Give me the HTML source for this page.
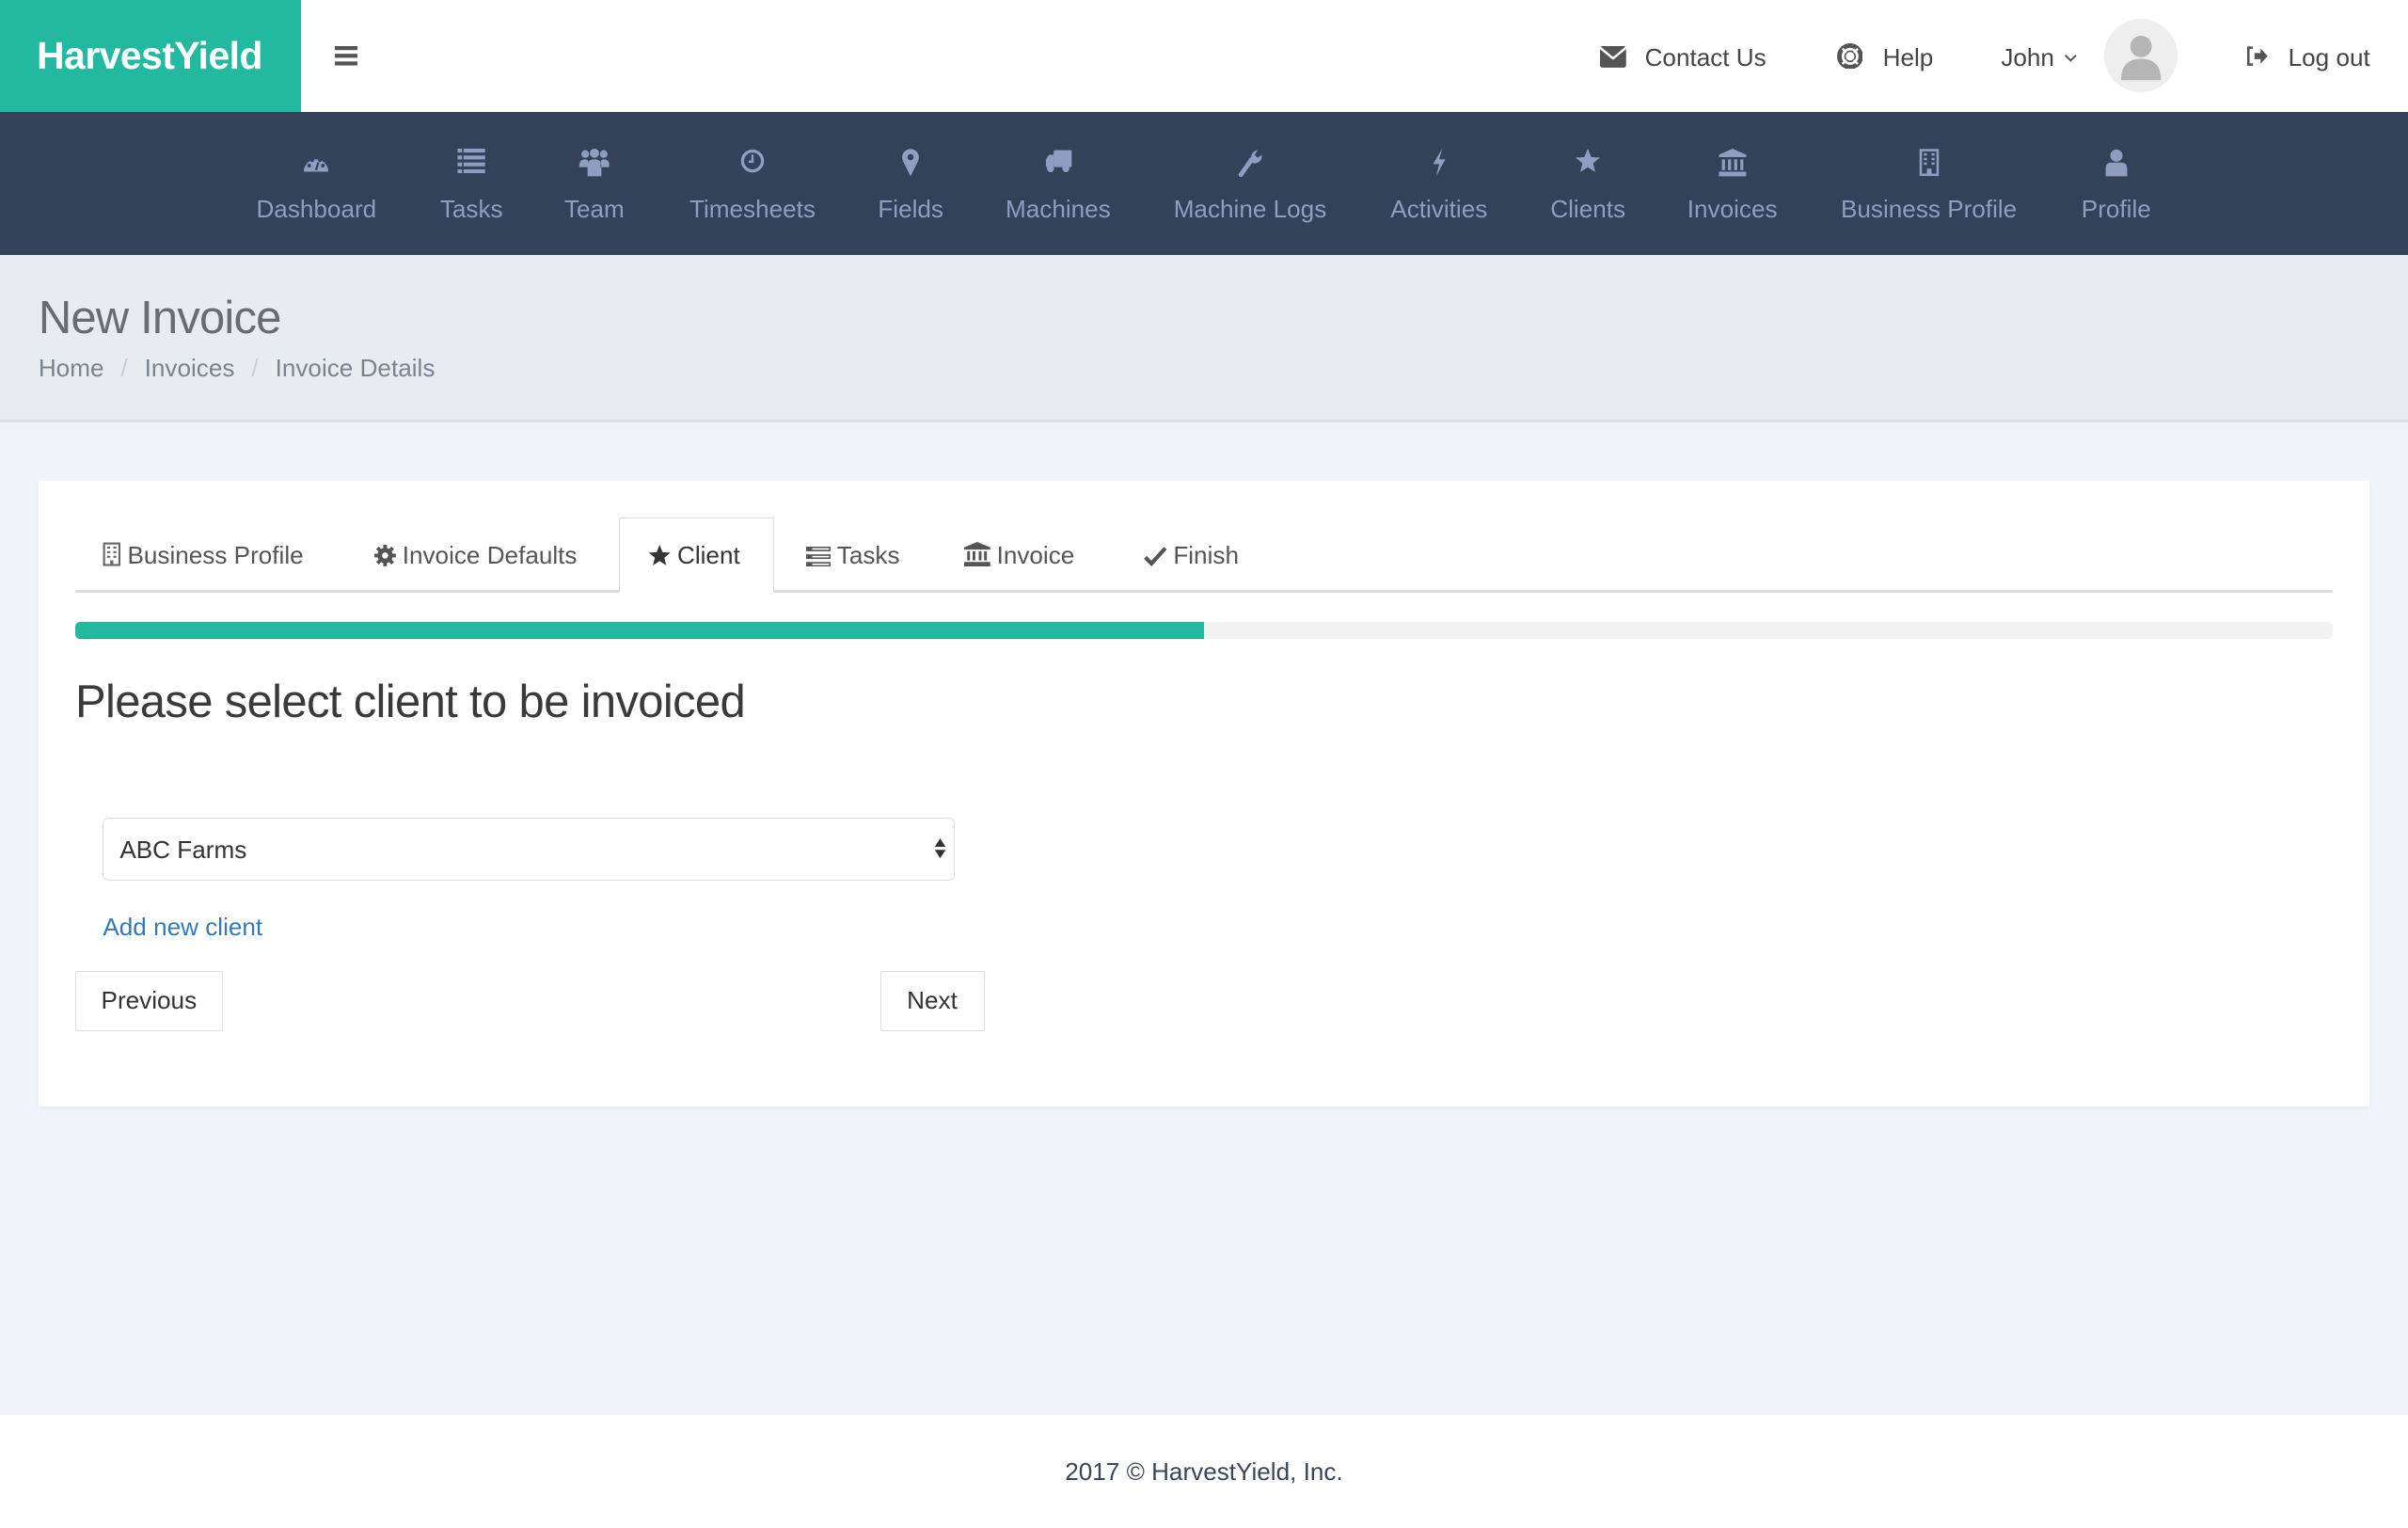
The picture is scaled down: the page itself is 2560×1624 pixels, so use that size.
<!DOCTYPE html>
<html><head><meta charset="utf-8">
<style>
*{box-sizing:border-box;margin:0;padding:0}
html,body{width:2560px;height:1624px;overflow:hidden;background:#f0f3f8}
#w{zoom:1.63265;width:1568px;height:995px;position:relative;font-family:"Liberation Sans",sans-serif;font-size:16px;color:#333}
.abs{position:absolute}
#top{left:0;top:0;width:1568px;height:73px;background:#fff}
#logo{left:0;top:0;width:196px;height:73px;background:#22b9a0;color:#fff;font-weight:bold;font-size:25px;line-height:73px;padding-left:24px;letter-spacing:-0.3px}
.tl{color:#444;font-size:16px;top:28px;white-space:nowrap}
#nav{left:0;top:73px;width:1568px;height:93px;background:#344259}
.ni{position:absolute;top:0;height:93px;text-align:center;color:#8d9ec0;font-size:16px;transform:translateX(-50%);white-space:nowrap}
.ni svg{position:absolute;left:50%;top:24px;transform:translateX(-50%)}
.ni span{position:absolute;top:54px;left:50%;transform:translateX(-50%)}
#ph{left:0;top:166px;width:1568px;height:109px;background:#e8ebf0;border-bottom:2px solid #dde1e7}
#card{left:25px;top:313px;width:1518px;height:407px;background:#fff;box-shadow:0 1px 2px rgba(0,0,0,.04)}
.tab{position:absolute;top:352px;font-size:16px;color:#555;white-space:nowrap}
.tab svg{vertical-align:-2px;margin-right:4px}
.btn{position:absolute;top:632px;height:39px;border:1px solid #ddd;background:#fff;line-height:37px;text-align:center;font-size:16px;color:#333}
#foot{left:0;top:921px;width:1568px;height:74px;background:#fff;text-align:center;line-height:74px;color:#3a4556;font-size:16px}
</style></head><body><div id="w">
<div id="top" class="abs"></div>
<div id="logo" class="abs">HarvestYield</div>
<svg class="abs" style="left:218px;top:30px" width="15" height="13"><rect y="0" width="15" height="2.6" fill="#555"/><rect y="5" width="15" height="2.6" fill="#555"/><rect y="10" width="15" height="2.6" fill="#555"/></svg>
<svg class="abs" style="left:1042px;top:30px" width="17" height="14"><rect x="0" y="0" width="17" height="14" rx="1.5" fill="#555"/><path d="M0 1 L8.5 8 L17 1" stroke="#fff" stroke-width="1.5" fill="none"/></svg>
<div class="abs tl" style="left:1071px">Contact Us</div>
<svg class="abs" style="left:1196px;top:28px" width="17" height="17"><circle cx="8.5" cy="8.5" r="7" stroke="#555" stroke-width="3" fill="none"/><circle cx="8.5" cy="8.5" r="3.3" fill="#fff" stroke="#555" stroke-width="1"/><path d="M3.5 3.5l2.5 2.5M13.5 3.5l-2.5 2.5M3.5 13.5l2.5-2.5M13.5 13.5l-2.5-2.5" stroke="#fff" stroke-width="1.5"/></svg>
<div class="abs tl" style="left:1226px">Help</div>
<div class="abs tl" style="left:1303px">John</div>
<svg class="abs" style="left:1344px;top:35px" width="9" height="6"><path d="M1 1l3.5 3.5L8 1" stroke="#555" stroke-width="1.2" fill="none"/></svg>
<div class="abs" style="left:1370px;top:12px;width:48px;height:48px;border-radius:50%;background:#eee;overflow:hidden"><svg width="48" height="48"><circle cx="24" cy="18" r="7" fill="#b5b5b5"/><path d="M11 40 Q11 26 24 26 Q37 26 37 40 Z" fill="#b5b5b5"/></svg></div>
<svg class="abs" style="left:1462px;top:30px" width="15" height="13"><path d="M5 1H2v11h3" stroke="#555" stroke-width="1.6" fill="none"/><path d="M6 4.5h4V1.5l4.5 5-4.5 5V8.5H6z" fill="#555"/></svg>
<div class="abs tl" style="left:1490px">Log out</div>

<div id="nav" class="abs">
<div class="ni" style="left:206px"><svg width="18" height="16" viewBox="0 0 18 16"><path d="M1 15 A8 8 0 0 1 17 15 Z" fill="#8d9ec0"/><circle cx="4.5" cy="11" r="1.2" fill="#344259"/><circle cx="6.5" cy="7.5" r="1.2" fill="#344259"/><circle cx="11.5" cy="7.5" r="1.2" fill="#344259"/><circle cx="13.5" cy="11" r="1.2" fill="#344259"/><path d="M9 14l1.5-5" stroke="#344259" stroke-width="1.4"/></svg><span>Dashboard</span></div>
<div class="ni" style="left:307px"><svg width="18" height="16"><g fill="#8d9ec0"><rect x="0" y="0" width="3" height="2.5"/><rect x="4" y="0" width="14" height="2.5"/><rect x="0" y="4.5" width="3" height="2.5"/><rect x="4" y="4.5" width="14" height="2.5"/><rect x="0" y="9" width="3" height="2.5"/><rect x="4" y="9" width="14" height="2.5"/><rect x="0" y="13.5" width="3" height="2.5"/><rect x="4" y="13.5" width="14" height="2.5"/></g></svg><span>Tasks</span></div>
<div class="ni" style="left:387px"><svg width="20" height="18"><g fill="#8d9ec0"><circle cx="4" cy="3.5" r="2.5"/><circle cx="16" cy="3.5" r="2.5"/><circle cx="10" cy="3" r="3"/><path d="M0 12 Q0 7 4 7 Q6 7 6 9 V12Z M20 12 Q20 7 16 7 Q14 7 14 9 V12Z M5.5 18 V11 Q5.5 7 10 7 Q14.5 7 14.5 11 V18Z"/></g></svg><span>Team</span></div>
<div class="ni" style="left:490px"><svg width="16" height="16"><circle cx="8" cy="8" r="6.5" stroke="#8d9ec0" stroke-width="2" fill="none"/><path d="M8 4v4.5h-2.5" stroke="#8d9ec0" stroke-width="1.5" fill="none"/></svg><span>Timesheets</span></div>
<div class="ni" style="left:593px"><svg width="12" height="18"><path d="M6 18 L1 8 A5.5 5.5 0 1 1 11 8 Z" fill="#8d9ec0"/><circle cx="6" cy="5.5" r="2" fill="#344259"/></svg><span>Fields</span></div>
<div class="ni" style="left:689px"><svg width="18" height="16"><g fill="#8d9ec0"><rect x="6" y="1" width="12" height="11" rx="1"/><path d="M1 7 L3 4 H6 V12 H1Z"/><circle cx="4" cy="13" r="2.3"/><circle cx="14" cy="13" r="2.3"/></g></svg><span>Machines</span></div>
<div class="ni" style="left:814px"><svg width="16" height="18"><path d="M2 17 L9 7" stroke="#8d9ec0" stroke-width="3" stroke-linecap="round"/><path d="M9 7 A4.5 4.5 0 0 1 13 1 L11 4 L13 6 L15.5 4 A4.5 4.5 0 0 1 9 9Z" fill="#8d9ec0"/></svg><span>Machine Logs</span></div>
<div class="ni" style="left:937px"><svg width="12" height="18"><path d="M8 0 L2 10 H6 L4 18 L10 7 H6 Z" fill="#8d9ec0"/></svg><span>Activities</span></div>
<div class="ni" style="left:1034px"><svg width="17" height="16"><path d="M8.5 0l2.2 5.4 5.8.4-4.5 3.7 1.4 5.7-4.9-3.1-4.9 3.1 1.4-5.7L.5 5.8l5.8-.4z" fill="#8d9ec0"/></svg><span>Clients</span></div>
<div class="ni" style="left:1128px"><svg width="18" height="18"><g fill="#8d9ec0"><path d="M9 0 L18 4 V5.5 H0 V4Z"/><rect x="2" y="7" width="2" height="7"/><rect x="6" y="7" width="2" height="7"/><rect x="10" y="7" width="2" height="7"/><rect x="14" y="7" width="2" height="7"/><rect x="0" y="15" width="18" height="3"/></g></svg><span>Invoices</span></div>
<div class="ni" style="left:1256px"><svg width="13" height="18"><rect x="1" y="1" width="11" height="16" fill="none" stroke="#8d9ec0" stroke-width="1.6"/><g fill="#8d9ec0"><rect x="3" y="3" width="2" height="1.5"/><rect x="8" y="3" width="2" height="1.5"/><rect x="3" y="6" width="2" height="1.5"/><rect x="8" y="6" width="2" height="1.5"/><rect x="3" y="9" width="2" height="1.5"/><rect x="8" y="9" width="2" height="1.5"/><rect x="5" y="13" width="3" height="4"/></g></svg><span>Business Profile</span></div>
<div class="ni" style="left:1378px"><svg width="14" height="18"><g fill="#8d9ec0"><circle cx="7" cy="4.5" r="4"/><path d="M0 18 V13 Q0 9 4 9 H10 Q14 9 14 13 V18Z"/></g></svg><span>Profile</span></div>
</div>

<div id="ph" class="abs"></div>
<div class="abs" style="left:25px;top:190px;font-size:30px;color:#6a6d70;letter-spacing:-0.5px">New Invoice</div>
<div class="abs" style="left:25px;top:230px;font-size:16px;color:#7a8390;white-space:nowrap">Home<span style="color:#ccc;padding:0 11px">/</span>Invoices<span style="color:#ccc;padding:0 11px">/</span>Invoice Details</div>

<div id="card" class="abs"></div>
<div class="abs" style="left:49px;top:384px;width:1470px;height:2px;background:#ddd"></div>
<div class="abs" style="left:403px;top:337px;width:101px;height:49px;background:#fff;border:1px solid #ddd;border-bottom:none"></div>
<div class="tab" style="left:67px"><svg width="12" height="16"><rect x="1" y="1" width="10" height="14" fill="none" stroke="#666" stroke-width="1.3"/><g fill="#666"><rect x="3" y="3" width="2" height="1.3"/><rect x="7" y="3" width="2" height="1.3"/><rect x="3" y="6" width="2" height="1.3"/><rect x="7" y="6" width="2" height="1.3"/><rect x="3" y="9" width="2" height="1.3"/><rect x="7" y="9" width="2" height="1.3"/><rect x="5" y="12" width="2" height="3"/></g></svg>Business Profile</div>
<div class="tab" style="left:244px"><svg width="14" height="14" viewBox="0 0 14 14"><circle cx="7" cy="7" r="5" fill="#555"/><g stroke="#555" stroke-width="2.4"><path d="M7 0v14M0 7h14M2 2l10 10M12 2L2 12"/></g><circle cx="7" cy="7" r="2" fill="#fff"/></svg>Invoice Defaults</div>
<div class="tab" style="left:422px;color:#333"><svg width="15" height="14"><path d="M7.5 0l1.9 4.8 5.1.3-3.9 3.3 1.2 5-4.3-2.8-4.3 2.8 1.2-5L.5 5.1l5.1-.3z" fill="#333"/></svg>Client</div>
<div class="tab" style="left:525px"><svg width="16" height="13"><g fill="#555"><rect x="0" y="0" width="16" height="3"/><rect x="0" y="5" width="16" height="3"/><rect x="0" y="10" width="16" height="3"/></g><g fill="#fff"><rect x="4" y="1" width="11" height="1"/><rect x="4" y="6" width="11" height="1"/><rect x="4" y="11" width="11" height="1"/></g></svg>Tasks</div>
<div class="tab" style="left:628px"><svg width="17" height="16"><g fill="#555"><path d="M8.5 0 L17 3.5 V5 H0 V3.5Z"/><rect x="2" y="6" width="1.8" height="6"/><rect x="5.5" y="6" width="1.8" height="6"/><rect x="9.5" y="6" width="1.8" height="6"/><rect x="13" y="6" width="1.8" height="6"/><rect x="0" y="13" width="17" height="3"/></g></svg>Invoice</div>
<div class="tab" style="left:745px"><svg width="15" height="13"><path d="M1 7l4 4 9-10" stroke="#555" stroke-width="2.6" fill="none"/></svg>Finish</div>

<div class="abs" style="left:49px;top:405px;width:1470px;height:11px;background:#f2f2f2;border-radius:3px;overflow:hidden"><div style="width:735px;height:11px;background:#22b9a0;border-bottom:1px solid #1a9e87"></div></div>
<div class="abs" style="left:49px;top:440px;font-size:30px;color:#3a3a3a;white-space:nowrap;letter-spacing:-0.4px">Please select client to be invoiced</div>

<div class="abs" style="left:67px;top:532px;width:555px;height:41px;border:1px solid #ddd;border-radius:4px;background:#fff"></div>
<div class="abs" style="left:78px;top:544px;font-size:16px;color:#333">ABC Farms</div>
<svg class="abs" style="left:608px;top:546px" width="8" height="13"><path d="M4 0L7.5 5.5H.5Z M4 13L7.5 7.5H.5Z" fill="#333"/></svg>
<div class="abs" style="left:67px;top:594px;font-size:16px;color:#337ab7">Add new client</div>
<div class="btn" style="left:49px;width:96px">Previous</div>
<div class="btn" style="left:573px;width:68px">Next</div>

<div id="foot" class="abs">2017 © HarvestYield, Inc.</div>
</div></body></html>
